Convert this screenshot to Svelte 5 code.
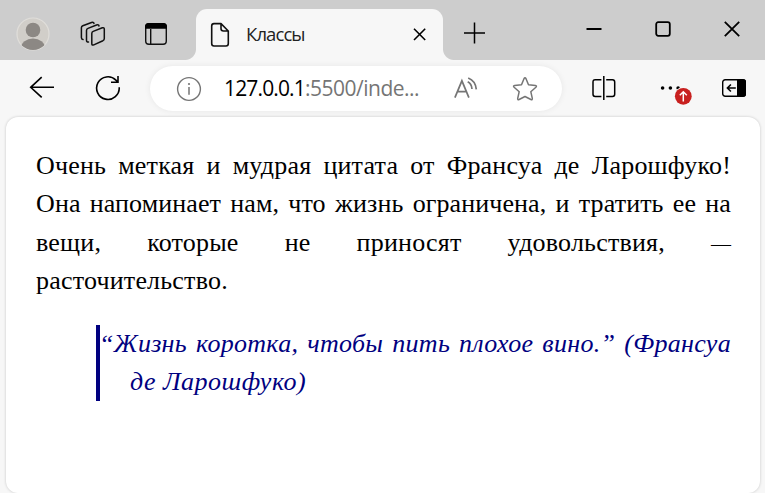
<script>
  const lines = [
    'Очень меткая и мудрая цитата от Франсуа де Ларошфуко!',
    'Она напоминает нам, что жизнь ограничена, и тратить ее на',
    'вещи, которые не приносят удовольствия,',
    'расточительство.'
  ];
  const quote = ['“Жизнь коротка, чтобы пить плохое вино.” (Франсуа', 'де Ларошфуко)'];
</script>

<div class="window">
  <header class="titlebar">
    <svg class="avatar" viewBox="0 0 34 34">
      <defs><clipPath id="face"><circle cx="17" cy="17" r="16" /></clipPath></defs>
      <circle cx="17" cy="17" r="16" fill="#d1cec9" stroke="#e0deda" stroke-width="1.2" />
      <g clip-path="url(#face)" fill="#8c8884"><circle cx="17" cy="13" r="7.3" /><ellipse cx="17" cy="31" rx="12" ry="9.5" /></g>
    </svg>
    <svg class="stack" viewBox="0 0 26 26">
      <g fill="none" stroke="#111" stroke-width="1.5" stroke-linejoin="round" stroke-linecap="round">
        <path d="M13.2 10.4 22.3 6.8Q24.3 6.2 24.3 8V17.5Q24.3 19 22.9 19.7L13.8 23.9Q11.8 24.6 11.8 22.8V12.4Q11.8 11 13.2 10.4Z" />
        <path d="M8.5 21Q6.5 21.2 6.5 19.2V9.5Q6.5 8 8 7.4L16.5 4Q18.7 3.3 19 5" />
        <path d="M3 18.6Q1.4 18.4 1.4 16.6V6.8Q1.4 5.3 2.8 4.7L11.5 1.5Q13.6.9 14 2.4" />
      </g>
    </svg>
    <svg class="tabs" viewBox="0 0 24 24">
      <rect x="1.7" y="1.7" width="20.6" height="20.6" rx="3.2" fill="none" stroke="#111" stroke-width="1.4" />
      <path d="M1 6.7V4Q1.5 1 5 1H19Q22.5 1 23 4V6.7Z" /><path d="M6.7 7V22" stroke="#111" stroke-width="1.4" />
    </svg>
    <div class="tab">
      <svg class="file" viewBox="0 0 20 26"><path d="M4 1.6H11L18.3 9V21.5Q18.3 24 16 24H4Q1.7 24 1.7 21.5V4Q1.7 1.6 4 1.6ZM11 1.6V6.5Q11 9 13.5 9H18.3" fill="none" stroke="#111" stroke-width="1.6" stroke-linejoin="round" /></svg>
      <span class="title">Классы</span>
      <svg class="tabclose" viewBox="0 0 14 14"><path d="M1 .8 12.2 12M12.2 .8 1 12" stroke="#000" stroke-width="1.6" /></svg>
    </div>
    <svg class="plus" viewBox="0 0 22 22"><path d="M10.5 .5V21.5M0 11H21" stroke="#000" stroke-width="1.5" /></svg>
    <div class="controls">
      <svg viewBox="0 0 16 16"><path d="M.5 8H15.5" stroke="#000" stroke-width="2" /></svg>
      <svg viewBox="0 0 16 16"><rect x="1.2" y="1.2" width="13.6" height="13.6" rx="2" fill="none" stroke="#000" stroke-width="1.8" /></svg>
      <svg viewBox="0 0 16 16"><path d="M.8 .8 15.2 15.2M15.2 .8 .8 15.2" stroke="#000" stroke-width="1.8" /></svg>
    </div>
  </header>

  <nav class="toolbar">
    <svg class="back" viewBox="0 0 26 24"><path d="M25 12.3H1.6M12.7 2.1 1.7 12.3 12.7 22.4" fill="none" stroke="#000" stroke-width="1.6" /></svg>
    <svg class="reload" viewBox="0 0 26 26"><path d="M24.2 12.3A11.3 11.3 0 1 1 20.9 5.1L23 7.2M23 1V7.3H16" fill="none" stroke="#000" stroke-width="1.6" /></svg>
    <div class="address">
      <svg class="info" viewBox="0 0 26 26"><circle cx="13" cy="13" r="11.4" fill="none" stroke="#757575" stroke-width="1.4" /><path d="M13 11V18.8" stroke="#757575" stroke-width="1.5" /><circle cx="13" cy="8" r="1.1" fill="#757575" /></svg>
      <span class="url"><b>127.0.0.1</b>:5500/inde...</span>
      <svg class="read" viewBox="0 0 24 24"><path d="M.9 20.6 7.9 3.8 14.9 20.6M3.6 14.6H12.2M13.7 4.8Q17.6 6.8 18 12M14.2 1Q21.6 3.9 22.3 12.4" fill="none" stroke="#757575" stroke-width="1.7" /></svg>
      <svg class="star" viewBox="0 0 26 26"><path d="M12.1 2.5Q13 1 13.9 2.5L16.5 8.8 23.4 9.5Q25.2 9.8 23.9 11.2L18.8 15.7 20.3 22.4Q20.5 24.2 18.9 23.5L13 20.5 7.1 23.5Q5.5 24.2 5.7 22.4L7.2 15.7 2.1 11.2Q.8 9.8 2.6 9.5L9.5 8.8Z" fill="none" stroke="#757575" stroke-width="1.5" stroke-linejoin="round" /></svg>
    </div>
    <svg class="split" viewBox="0 0 24 24"><path d="M9.4 3.7H3.2Q1 3.7 1 6V18.3Q1 20.5 3.2 20.5H9.4M14.2 3.7H20.5Q22.7 3.7 22.7 6V18.3Q22.7 20.5 20.5 20.5H14.2M11.8 0V24" fill="none" stroke="#000" stroke-width="1.5" /></svg>
    <svg class="more" viewBox="0 0 34 26"><g fill="#000"><circle cx="3.6" cy="9" r="1.8" /><circle cx="11.4" cy="9" r="1.8" /><circle cx="19.1" cy="9" r="1.8" /></g><circle cx="24.3" cy="17.3" r="9.4" fill="#f7f7f7" /><circle cx="24.3" cy="17.3" r="8.4" fill="#c8201f" /><path d="M24.3 22.5V13M20.8 16.2 24.3 12.7 27.8 16.2" fill="none" stroke="#fff" stroke-width="1.5" /></svg>
    <svg class="side" viewBox="0 0 24 18"><rect x=".7" y=".7" width="22.6" height="16.6" rx="2.5" fill="none" stroke="#000" stroke-width="1.4" /><path d="M15 .2H21.5Q24 .2 24 3V15Q24 17.8 21.5 17.8H15Z" /><path d="M13.8 9H5.5M8.9 5.5 5.4 9 8.9 12.5" fill="none" stroke="#000" stroke-width="1.6" /></svg>
  </nav>

  <main class="page">
    <p>{#each lines as line, i}<span class="line l{i}">{line}{#if i === 2}{' '}<span class="dash">—</span>{/if}</span>{/each}</p>
    <blockquote>{#each quote as line, i}<span class="line q{i}">{line}</span>{/each}</blockquote>
  </main>
</div>

<style>
  :global(body) { margin: 0; }
  .window { width: 765px; height: 493px; overflow: hidden; background: #f7f7f7; display: flex; flex-direction: column; box-sizing: border-box; }
  svg { display: block; flex: none; }
  .titlebar { height: 60px; flex: none; background: #cdcdcd; display: flex; align-items: flex-start; }
  .avatar { width: 34px; height: 34px; margin: 17px 0 0 16px; }
  .stack { width: 26px; height: 26px; margin: 21px 0 0 30px; }
  .tabs { width: 24px; height: 24px; margin: 22px 0 0 38px; }
  .tab { position: relative; width: 247px; height: 51px; box-sizing: border-box; margin: 9px 0 0 28px; padding: 0 16px 0 14px; border-radius: 11px 11px 0 0; background: #f7f7f7; display: flex; align-items: center; }
  .tab::before, .tab::after { content: ''; position: absolute; bottom: 0; width: 11px; height: 11px; }
  .tab::before { left: -11px; background: radial-gradient(circle at 0 0, transparent 10.5px, #f7f7f7 11.5px); }
  .tab::after { right: -11px; background: radial-gradient(circle at 100% 0, transparent 10.5px, #f7f7f7 11.5px); }
  .file { width: 20px; height: 26px; }
  .title { margin: -2px 0 0 16px; font: 18.5px/24px 'Open Sans', 'Noto Sans', sans-serif; letter-spacing: -0.9px; color: #222; flex: 1; }
  .tabclose { width: 14px; height: 14px; }
  .plus { width: 22px; height: 22px; margin: 22px 0 0 21px; }
  .controls { display: flex; gap: 53px; margin: 21px 0 0 100px; }
  .controls svg { width: 16px; height: 16px; }
  .toolbar { height: 57px; flex: none; display: flex; align-items: flex-start; }
  .back { width: 26px; height: 24px; margin: 15px 0 0 29px; }
  .reload { width: 26px; height: 26px; margin: 15px 0 0 40px; }
  .address { width: 412px; height: 45px; box-sizing: border-box; margin: 6px 0 0 29px; padding: 0 24px 0 26px; border-radius: 23px; background: #fff; box-shadow: 0 0 6px rgba(0, 0, 0, .07); display: flex; align-items: center; }
  .info { width: 26px; height: 26px; }
  .url { margin: -1px 0 0 22px; width: 208px; white-space: nowrap; font: 21px/28px 'Open Sans', 'Noto Sans', sans-serif; letter-spacing: -0.5px; color: #757575; }
  .url b { font-weight: 400; color: #000; letter-spacing: -0.85px; }
  .read { width: 24px; height: 24px; margin-left: 22px; }
  .star { width: 26px; height: 26px; margin-left: auto; }
  .split { width: 24px; height: 24px; margin: 16px 0 0 30px; }
  .more { width: 34px; height: 26px; margin: 19px 0 0 43px; }
  .side { width: 24px; height: 18px; margin: 19px 0 0 29px; }
  .page { width: 754px; height: 376px; flex: none; box-sizing: border-box; margin-left: 6px; padding: 30px 29px 0 30px; border-radius: 12px; background: #fff; box-shadow: 0 0 3px rgba(0, 0, 0, .2); font: 26px/38.4px 'Liberation Serif', serif; color: #000; }
  p { margin: 0; }
  .line { display: block; height: 38.4px; white-space: nowrap; text-align: justify; text-align-last: justify; letter-spacing: 0.2px; }
  .l1 { letter-spacing: 0.1px; }
  .l3 { text-align-last: left; }
  .dash { font-size: 20px; letter-spacing: 0; line-height: 1; }
  blockquote { margin: 24px 0 0 60px; border-left: 4px solid #000080; padding-left: 30px; color: #000080; font-style: italic; }
  .q0 { margin-left: -31px; letter-spacing: 0.3px; }
  .q1 { text-align-last: left; letter-spacing: 0.5px; }
</style>
